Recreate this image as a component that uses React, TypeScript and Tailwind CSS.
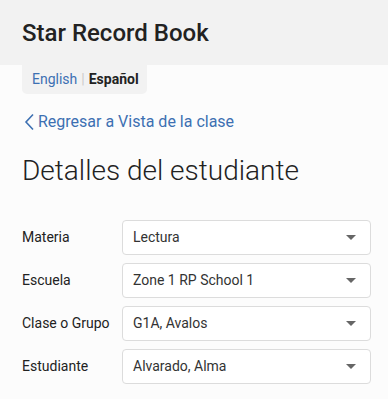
import React from 'react';

const fields = [
  { label: 'Materia', value: 'Lectura' },
  { label: 'Escuela', value: 'Zone 1 RP School 1' },
  { label: 'Clase o Grupo', value: 'G1A, Avalos' },
  { label: 'Estudiante', value: 'Alvarado, Alma' },
];

export default function App() {
  return (
    <div className="min-h-[399px] bg-[#fcfcfc] text-[#222] font-['Roboto',sans-serif]">
      {/* Header */}
      <header className="h-[65px] bg-[#f2f2f2] px-[22px] flex items-center">
        <h1 className="text-[24px] font-medium text-[#222] leading-none">Star Record Book</h1>
      </header>

      {/* Language switch */}
      <div className="ml-[22px] w-[125px] h-[29px] bg-[#f2f2f2] rounded-b-[5px] flex items-center px-[10px] text-[14px]">
        <span className="text-[#3d70b2]">English</span>
        <span className="mx-[4px] text-[#ccc]">|</span>
        <span className="font-bold text-[#222]">Español</span>
      </div>

      {/* Back link */}
      <a href="#" className="mt-[17px] ml-[23px] flex items-center h-[22px] text-[16px] text-[#3d70b2]">
        <svg width="12" height="18" viewBox="0 0 12 18" fill="none" className="mr-[3px]">
          <path d="M10 1.5 L3 9 L10 16.5" stroke="#3d70b2" strokeWidth="1.6" />
        </svg>
        Regresar a Vista de la clase
      </a>

      {/* Title */}
      <h2 className="mt-[21px] ml-[22px] text-[28px] font-light leading-[34px] text-[#222]">
        Detalles del estudiante
      </h2>

      {/* Form */}
      <div className="mt-[32px] pl-[22px] pr-[17px] flex flex-col gap-[8px]">
        {fields.map((f) => (
          <div key={f.label} className="flex items-center">
            <label className="w-[100px] text-[14px] text-[#222]">{f.label}</label>
            <div className="flex-1 h-[35px] border border-[#dcdcdc] rounded-[4px] bg-white flex items-center justify-between pl-[10px] pr-[14px]">
              <span className="text-[14px] text-[#333]">{f.value}</span>
              <svg width="10" height="5" viewBox="0 0 10 5">
                <path d="M0 0 L10 0 L5 5 Z" fill="#666" />
              </svg>
            </div>
          </div>
        ))}
      </div>
    </div>
  );
}
